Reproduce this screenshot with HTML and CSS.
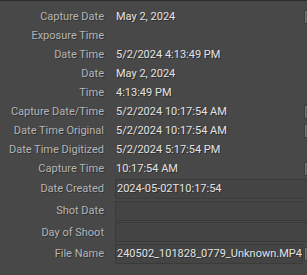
FILE: index.html
```html
<!DOCTYPE html>
<html lang="en">
<head>
    <meta charset="UTF-8">
    <meta name="viewport" content="width=device-width, initial-scale=1.0">
    <title>Metadata</title>
    <link rel="stylesheet" href="styles.css">
</head>
<body>
    <div class="panel">
        <div class="row">
            <span class="label">Capture Date</span>
            <span class="value">May 2, 2024</span>
            <span class="btn btn-arrow"></span>
        </div>
        <div class="row">
            <span class="label">Exposure Time</span>
            <span class="value"></span>
        </div>
        <div class="row">
            <span class="label">Date Time</span>
            <span class="value">5/2/2024 4:13:49 PM</span>
        </div>
        <div class="row">
            <span class="label">Date</span>
            <span class="value">May 2, 2024</span>
        </div>
        <div class="row">
            <span class="label">Time</span>
            <span class="value">4:13:49 PM</span>
        </div>
        <div class="row">
            <span class="label">Capture Date/Time</span>
            <span class="value">5/2/2024 10:17:54 AM</span>
            <span class="btn btn-arrow"></span>
        </div>
        <div class="row">
            <span class="label">Date Time Original</span>
            <span class="value">5/2/2024 10:17:54 AM</span>
            <span class="btn btn-arrow"></span>
        </div>
        <div class="row">
            <span class="label">Date Time Digitized</span>
            <span class="value">5/2/2024 5:17:54 PM</span>
        </div>
        <div class="row">
            <span class="label">Capture Time</span>
            <span class="value">10:17:54 AM</span>
            <span class="btn btn-list"></span>
        </div>

        <div class="row field">
            <span class="label">Date Created</span>
            <span class="value">2024-05-02T10:17:54</span>
        </div>
        <div class="row field">
            <span class="label">Shot Date</span>
            <span class="value"></span>
        </div>
        <div class="row field">
            <span class="label">Day of Shoot</span>
            <span class="value"></span>
        </div>
        <div class="row field">
            <span class="label">File Name</span>
            <span class="value">240502_101828_0779_Unknown.MP4</span>
            <span class="btn btn-list"></span>
        </div>
    </div>
</body>
</html>
```

FILE: styles.css
```css
:root {
    --panel-bg: #484848;
    --label-color: #b4b4b4;
    --value-color: #e2e2e2;
    --field-bg: #444444;
    --field-border: #3a3a3a;
}

body {
    margin: 0;
    background: var(--panel-bg);
    font-family: Roboto, 'Noto Sans', sans-serif;
    font-size: 11px;
    overflow: hidden;
}

.panel {
    width: 318px;
    border-top: 1px solid #2b2b2b;
    padding-top: 6px;
}

.row {
    display: flex;
    align-items: center;
    height: 19px;
}

.label {
    flex: none;
    width: 104px;
    text-align: right;
    color: var(--label-color);
    text-shadow: 1px 1px 0 #333;
    white-space: nowrap;
}

.value {
    flex: 1;
    min-width: 0;
    margin-left: 11px;
    padding-left: 1px;
    color: var(--value-color);
    text-shadow: 1px 1px 0 #2e2e2e;
    white-space: nowrap;
}

.field {
    height: 21.7px;
}

.field .value {
    height: 18px;
    line-height: 17px;
    padding-left: 1px;
    background: var(--field-bg);
    border: 1px solid var(--field-border);
}

.btn {
    flex: none;
    width: 12px;
    height: 12px;
    margin-left: 1px;
    background: #5c5c5c;
    border: 1px solid #3c3c3c;
    box-shadow: inset 1px 1px 0 #767676;
    position: relative;
}

.btn-arrow::after {
    content: '';
    position: absolute;
    left: 3px;
    top: 5px;
    width: 6px;
    height: 2px;
    background: #c8c8c8;
}

.btn-list::after {
    content: '';
    position: absolute;
    left: 3px;
    top: 2px;
    width: 6px;
    height: 8px;
    background: repeating-linear-gradient(to bottom, #d0d0d0 0, #d0d0d0 1px, transparent 1px, transparent 3px);
}
```
